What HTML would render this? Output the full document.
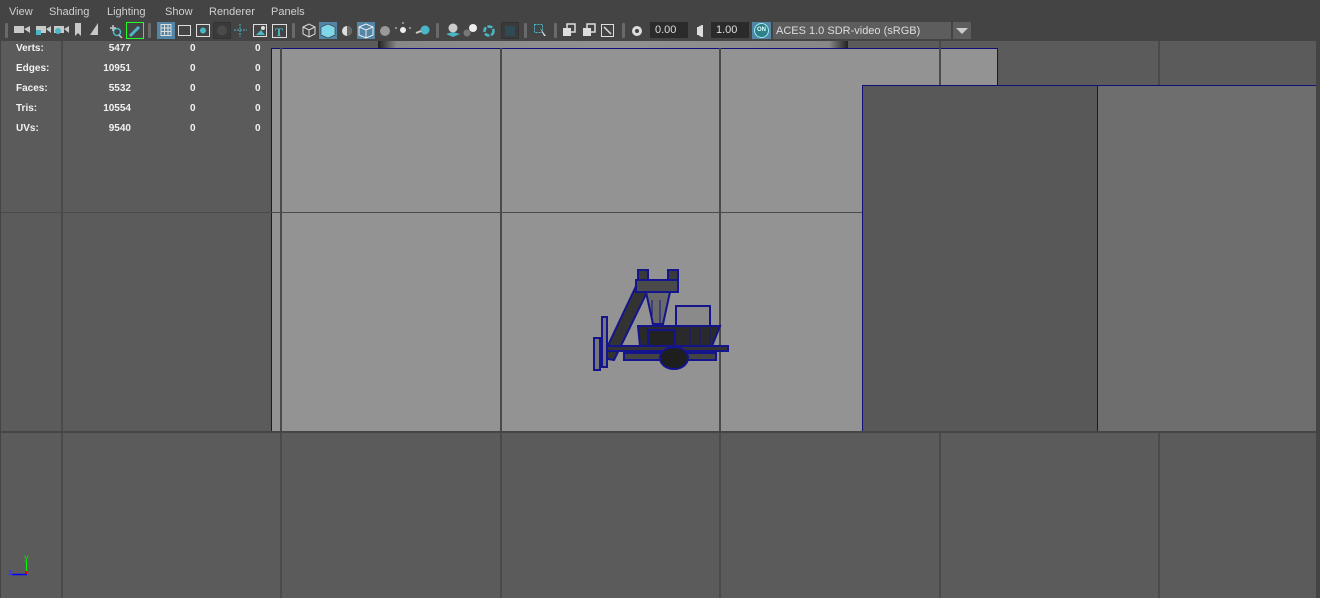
<!DOCTYPE html>
<html><head><meta charset="utf-8"><style>
*{margin:0;padding:0;box-sizing:border-box}
body{width:1320px;height:598px;background:#444;position:relative;overflow:hidden;font-family:"Liberation Sans",sans-serif}
.a{position:absolute}
.menu{top:6px;font-size:11px;color:#d0d0d0}
.sep{position:absolute;top:23px;width:3px;height:15px;background:#6a6a6a;border-radius:1px}
.hl{position:absolute;top:22px;width:18px;height:17px;background:#5285a6}
.hud{position:absolute;font-size:10px;font-weight:bold;color:#f2f2f2}
.vl{position:absolute;width:2px;background:#4a4a4a}
.hlne{position:absolute;height:2px;background:#4a4a4a}
</style></head><body>
<div class="a menu" style="left:9px">View</div>
<div class="a menu" style="left:49px">Shading</div>
<div class="a menu" style="left:107px">Lighting</div>
<div class="a menu" style="left:165px">Show</div>
<div class="a menu" style="left:209px">Renderer</div>
<div class="a menu" style="left:271px">Panels</div>

<div class="sep" style="left:5px"></div>
<div class="sep" style="left:148px"></div>
<div class="sep" style="left:292px"></div>
<div class="sep" style="left:436px"></div>
<div class="sep" style="left:524px"></div>
<div class="sep" style="left:554px"></div>
<div class="sep" style="left:622px"></div>
<div class="hl" style="left:157px"></div>
<div class="hl" style="left:319px"></div>
<div class="hl" style="left:357px"></div>
<div class="a" style="left:213px;top:22px;width:18px;height:17px;background:#3a3a3a;border:1px solid #333"></div>
<div class="a" style="left:501px;top:22px;width:18px;height:17px;background:#3a3a3a;border:1px solid #333"></div>
<div class="a" style="left:126px;top:22px;width:18px;height:17px;border:1px solid #2f2"></div>

<svg class="a" style="left:0;top:20px" width="1000" height="22">
<g fill="#c8c8c8" stroke="none">
<rect x="14" y="6" width="10" height="7"/><path d="M24 9 l6 -3 v7z"/>
<rect x="36" y="6" width="10" height="7"/><path d="M46 9 l5 -3 v7z"/>
<rect x="54" y="6" width="10" height="7"/><path d="M64 9 l5 -3 v7z"/>
<path d="M75 3h6v13l-3-3-3 3z"/>
<path d="M90 15 l8-12 v12z"/>
</g>
<circle cx="58" cy="11" r="3" fill="#4ab7c6"/>
<rect x="36" y="10" width="5" height="5" fill="#4ab7c6"/>
<circle cx="117" cy="12" r="3.5" fill="none" stroke="#4ab7c6" stroke-width="1.5"/>
<path d="M110 8h6M113 5v6M119 15l3 3" stroke="#c8c8c8" stroke-width="1.5"/>
<path d="M130 16l9-9" stroke="#4ab7c6" stroke-width="3"/>
<g fill="none" stroke="#ddd" stroke-width="1">
<rect x="161" y="4.5" width="10" height="11"/><path d="M164.5 4.5v11M168 4.5v11M161 8h10M161 11.5h10"/>
<rect x="178.5" y="5.5" width="12" height="10"/>
<rect x="196.5" y="4.5" width="13" height="12"/>
<rect x="253.5" y="4.5" width="13" height="12"/>
<rect x="272.5" y="4.5" width="14" height="13"/>
<path d="M303 7l6-3 6 3v7l-6 3-6-3z M303 7l6 3 6-3 M309 10v7"/>
<path d="M359 7l7-3 7 3v8l-7 3-7-3z M359 7l7 3 7-3 M366 10v8" stroke="#eee"/>
</g>
<circle cx="203" cy="10.5" r="3" fill="#4ab7c6"/>
<circle cx="222" cy="10.5" r="5" fill="#4a4a4a"/>
<path d="M234 10h13M240 4v13" stroke="#4ab7c6" stroke-dasharray="2 1"/>
<path d="M256 15l5-5 4 5z" fill="#4ab7c6"/><circle cx="263" cy="8" r="2" fill="#ddd"/>
<text x="275" y="16" font-size="12" font-weight="bold" fill="#4ab7c6" font-family="Liberation Serif">T</text>
<path d="M321 7l7-3 7 3v8l-7 3-7-3z" fill="#7fd6e6" stroke="#333" stroke-width=".6"/>
<circle cx="347" cy="11" r="5" fill="#ddd"/><path d="M347 6a5 5 0 0 1 0 10z" fill="#666"/>
<circle cx="385" cy="11" r="5" fill="#999"/>
<circle cx="403" cy="10" r="3" fill="#eee"/><path d="M397 8h-2M411 8h-2M403 4v-2" stroke="#ddd"/>
<circle cx="425" cy="10" r="4.5" fill="#4ab7c6"/><path d="M416 13l5-2" stroke="#ccc" stroke-width="2"/>
<circle cx="453" cy="8" r="4.5" fill="#ccc"/><path d="M446 14l7 3 7-3-7-2z" fill="#4ab7c6"/>
<circle cx="473" cy="8" r="4" fill="#eee"/><circle cx="467" cy="13" r="3.5" fill="#777"/>
<circle cx="489" cy="11" r="4.5" fill="none" stroke="#4ab7c6" stroke-width="2.5" stroke-dasharray="5 1.5"/>
<rect x="505" y="6" width="10" height="10" fill="#2f4a52"/>
<rect x="534.5" y="4.5" width="8" height="8" fill="none" stroke="#4ab7c6" stroke-dasharray="2 1"/><path d="M540 8l6 8-2 0z" fill="#ddd"/>
<rect x="563" y="8" width="8" height="8" fill="#ddd"/><rect x="567" y="4" width="8" height="8" fill="none" stroke="#ddd" stroke-width="1.5"/>
<rect x="583" y="8" width="8" height="8" fill="#ddd"/><rect x="587" y="4" width="8" height="8" fill="none" stroke="#ddd" stroke-width="1.5"/>
<rect x="601.5" y="4.5" width="12" height="12" fill="none" stroke="#ddd"/><path d="M604 7l7 7" stroke="#ddd" stroke-width="1.5"/>
<circle cx="637" cy="11" r="5" fill="#ddd"/><circle cx="637" cy="11" r="2" fill="#444"/>
<path d="M703 5a6 6 0 0 0 0 12z" fill="#ddd"/><rect x="697" y="7" width="3" height="8" fill="#ddd"/>
</svg>
<div class="a" style="left:650px;top:22px;width:38px;height:16px;background:#2b2b2b;color:#ddd;font-size:11px;padding:2px 0 0 5px">0.00</div>
<div class="a" style="left:711px;top:22px;width:38px;height:16px;background:#2b2b2b;color:#ddd;font-size:11px;padding:2px 0 0 5px">1.00</div>
<div class="a" style="left:752px;top:22px;width:19px;height:17px;background:#5285a6"></div>
<div class="a" style="left:754px;top:23px;width:15px;height:15px;border-radius:50%;background:#2e7f86;border:1px solid #9ee;color:#dff;font-size:6px;font-weight:bold;text-align:center;line-height:13px">ON</div>
<div class="a" style="left:773px;top:22px;width:178px;height:17px;background:#5d5d5d;color:#ddd;font-size:11px;padding:3px 0 0 3px">ACES 1.0 SDR-video (sRGB)</div>
<div class="a" style="left:953px;top:22px;width:18px;height:17px;background:#5d5d5d"></div>
<div class="a" style="left:956px;top:28px;width:0;height:0;border-left:6px solid transparent;border-right:6px solid transparent;border-top:6px solid #ccc"></div>

<!-- viewport -->
<div class="a" style="left:1px;top:41px;width:1315px;height:557px;background:#5b5b5b"></div>
<div class="a" style="left:378px;top:41px;width:470px;height:8px;background:linear-gradient(90deg,#222,#888 4%,#919191 50%,#888 96%,#222)"></div>
<div class="a" style="left:271px;top:48px;width:591px;height:384px;background:#939393;border-top:1px solid #10107a;border-left:1px solid #10107a"></div>
<div class="a" style="left:862px;top:48px;width:136px;height:38px;background:#939393;border-top:1px solid #10107a;border-right:1px solid #10107a"></div>
<div class="vl" style="left:61px;top:41px;height:557px"></div>
<div class="vl" style="left:280px;top:48px;height:550px"></div>
<div class="vl" style="left:500px;top:48px;height:550px"></div>
<div class="vl" style="left:719px;top:48px;height:550px"></div>
<div class="vl" style="left:939px;top:41px;height:557px"></div>
<div class="vl" style="left:1158px;top:41px;height:557px"></div>
<div class="hlne" style="left:1px;top:212px;width:862px;height:1px;background:#4a4a4a"></div>
<div class="a" style="left:862px;top:85px;width:236px;height:347px;background:#585858;border-top:1px solid #10107a;border-left:1px solid #10107a;border-right:1px solid #10107a"></div>
<div class="a" style="left:1098px;top:85px;width:218px;height:347px;background:#6e6e6e;border-top:1px solid #10107a"></div>
<div class="hlne" style="left:1px;top:431px;width:1315px;height:2px;background:#454545"></div>

<div class="hud" style="left:16px;top:43px">Verts:</div><div class="hud" style="left:100px;top:43px;width:31px;text-align:right">5477</div>
<div class="hud" style="left:16px;top:63px">Edges:</div><div class="hud" style="left:100px;top:63px;width:31px;text-align:right">10951</div>
<div class="hud" style="left:16px;top:83px">Faces:</div><div class="hud" style="left:100px;top:83px;width:31px;text-align:right">5532</div>
<div class="hud" style="left:16px;top:103px">Tris:</div><div class="hud" style="left:100px;top:103px;width:31px;text-align:right">10554</div>
<div class="hud" style="left:16px;top:123px">UVs:</div><div class="hud" style="left:100px;top:123px;width:31px;text-align:right">9540</div>
<div class="hud" style="left:190px;top:43px">0</div><div class="hud" style="left:255px;top:43px">0</div>
<div class="hud" style="left:190px;top:63px">0</div><div class="hud" style="left:255px;top:63px">0</div>
<div class="hud" style="left:190px;top:83px">0</div><div class="hud" style="left:255px;top:83px">0</div>
<div class="hud" style="left:190px;top:103px">0</div><div class="hud" style="left:255px;top:103px">0</div>
<div class="hud" style="left:190px;top:123px">0</div><div class="hud" style="left:255px;top:123px">0</div>

<svg class="a" style="left:0;top:540px" width="40" height="40">
<path d="M26.5 21v14" stroke="#0f0" stroke-width="1"/><path d="M12 34.5h15" stroke="#00f" stroke-width="1.5"/>
<text x="24" y="20" font-size="8" font-weight="bold" fill="#0d0" font-family="Liberation Mono">y</text>
<text x="8" y="35" font-size="8" font-weight="bold" fill="#33f" font-family="Liberation Mono">z</text>
<rect x="25" y="31" width="2" height="3" fill="#d00"/>
</svg>

<svg class="a" style="left:580px;top:260px" width="160" height="120">
<g stroke="#14148c" stroke-width="2">
<path d="M22 98 L58 22 L70 26 L34 100z" fill="#333"/>
<path d="M56 20 h42 v12 h-42z" fill="#4a4a4a"/>
<path d="M58 10 h10 v10 h-10z M88 10 h10 v10 h-10z" fill="#3a3a3a"/>
<path d="M66 32 h24 l-7 32 h-10z" fill="#6a6a6a"/>
<path d="M96 46 h34 v22 h-34z" fill="#8a8a8a"/>
<path d="M58 66 h82 l-8 20 h-72z" fill="#2a2a2a"/>
<path d="M22 86 h126 v5 h-126z" fill="#333"/>
<path d="M14 78 h6 v32 h-6z M22 57 h5 v50 h-5z" fill="#777"/>
<path d="M44 93 h92 v7 h-92z" fill="#444"/>
<ellipse cx="94" cy="98" rx="14" ry="11" fill="#1e1e1e"/>
<path d="M68 70 h27 v16 h-27z" fill="#222"/>
<path d="M110 68v18M120 68v18M130 68v18M72 40v24M80 40v24" fill="none" stroke-width="1"/>
</g>
</svg>
</body></html>
